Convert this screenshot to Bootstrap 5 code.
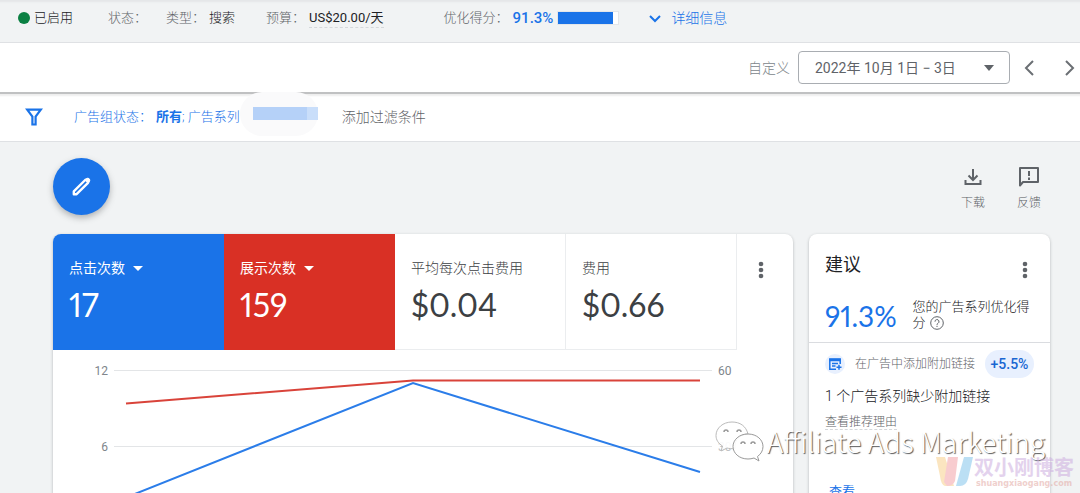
<!DOCTYPE html>
<html lang="zh-CN">
<head>
<meta charset="utf-8">
<meta name="viewport" content="width=device-width, initial-scale=1">
<title>广告系列</title>
<link href="https://cdn.jsdelivr.net/npm/bootstrap@5.3.0/dist/css/bootstrap.min.css" rel="stylesheet">
<style>
  body { font-family: Roboto, "Noto Sans CJK SC", sans-serif; font-size: 13px; line-height: 20px; font-weight: 300; color: #3c4043; background: #f1f3f4; }
  svg { display: block; flex: none; }
  a { color: #1a73e8; text-decoration: none; }
  b { font-weight: 700; }
  button { font: inherit; border: 0; background: none; padding: 0; color: inherit; }
  .shell { height: 100vh; overflow: hidden; }
  .status-bar { height: 43px; padding: 0 18px 7px; border-bottom: 1px solid #dfe1e4; box-shadow: inset 0 4px 2px -2px #e4e6e8; }
  .muted { color: #5f6368; }
  .faint { color: #80868b; }
  .dark { color: #202124; }
  .blue { color: #1a73e8; }
  .dot { width: 12px; height: 12px; background: #0b8043; }
  .gap-s { margin-left: 19px; }
  .gap-m { margin-left: 31px; }
  .gap-l { margin-left: 60px; }
  .dashed { border-bottom: 1px dashed #d5d8db; }
  .budget { font-weight: 400; line-height: 18px; padding-top: 1px; }
  .score { font-family: Roboto, sans-serif; font-size: 15px; font-weight: 500; }
  .meter { width: 62px; height: 14px; border: 1px solid #e4e6e9; background: #fff; }
  .meter-fill { height: 12px; background: #1a73e8; }
  .fs14 { font-size: 14px; }
  .fs12 { font-size: 12px; }
  .date-bar { height: 51px; background: #fff; border-bottom: 2px solid #c0c1c2; padding-right: 5px; }
  .date-btn { width: 212px; height: 33px; border: 1px solid #a9adb2; border-radius: 4px; padding: 0 14px 0 16px; margin-right: 14px; font-weight: 400; color: #5f6368; }
  .filter-bar { height: 48px; background: #fff; border-bottom: 1px solid #dfe1e4; box-shadow: inset 0 4px 2px -2px #eee; padding: 0 0 2px 25px; }
  .filter-link { margin-left: 31px; }
  .smudge { width: 78px; height: 44px; border-radius: 34px; background: #fafafb; margin-top: -2px; padding: 15px 0 0 13px; align-self: flex-start; }
  .smudge-fill { height: 13px; background: linear-gradient(90deg, #b5d1f8 54px, #c9defa 54px); }
  .content { padding: 16px 30px 0 53px; }
  .fab { width: 57px; height: 57px; border-radius: 50%; background: #1a73e8; box-shadow: 0 3px 6px rgba(60,64,67,.35); }
  .tools { gap: 32px; padding: 5px 9px 0 0; }
  .tools button { width: 24px; white-space: nowrap; }
  .panel { background: #fff; border-radius: 8px; box-shadow: 0 1px 3px rgba(60,64,67,.35); overflow: hidden; }
  .panels { gap: 16px; margin-top: 19px; }
  .tile { flex: 1 1 0; height: 116px; padding: 24px 16px 0; text-align: left; border-right: 1px solid #ebedef; border-bottom: 1px solid #ebedef; }
  .tile-blue { background: #1a73e8; border-color: #1a73e8; color: #fff; }
  .tile-red { background: #d93025; border-color: #d93025; color: #fff; }
  .tile-blue, .tile-red { font-weight: 400; }
  .big-num { font-family: Lato, sans-serif; font-size: 32px; line-height: 40px; font-weight: 400; font-variant-numeric: proportional-nums; margin-top: 7px; }
  .more { width: 56px; padding: 27px 0 0; }
  .advice { width: 241px; height: 400px; flex: none; }
  .advice-top { padding: 16px 14px 0 16px; height: 109px; border-bottom: 1px solid #dadce0; }
  .advice-body { padding: 7px 16px 0; }
  .title { font-size: 18px; line-height: 30px; font-weight: 400; }
  .pct { font-family: Lato, sans-serif; font-size: 28px; line-height: 32px; font-weight: 400; font-variant-numeric: proportional-nums; padding-top: 2px; }
  .lh16 { line-height: 16px; }
  .chip { width: 20px; height: 20px; border-radius: 50%; background: #e8f0fe; }
  .gain { width: 49px; height: 28px; border-radius: 14px; background: #e8f0fe; color: #1967d2; font-size: 14px; font-weight: 500; }
  .axis { font: 400 12px Roboto, sans-serif; fill: #80868b; }
  .wm-wechat { right: 35px; bottom: 30px; gap: 3px; color: #fff; font: 300 28px/40px "Noto Sans CJK SC", sans-serif; text-shadow: 1px 1px 1px #555; }
  .wm-blog { right: 6px; bottom: 1px; height: 40px; opacity: .55; }
  .wm-name { font: 700 20px/24px "Noto Sans CJK SC", sans-serif; color: #cdaee0; }
  .wm-url { font: 700 8px/10px "DejaVu Sans", sans-serif; color: #e3a9a4; }
</style>
</head>
<body>
<div class="shell position-relative">
  <header class="status-bar d-flex align-items-center text-nowrap">
    <span class="dot rounded-circle me-1"></span><span class="dark">已启用</span>
    <span class="muted gap-m ps-1">状态：</span>
    <span class="muted gap-s">类型：</span><span class="dark ms-1">搜索</span>
    <span class="muted gap-m">预算：</span><span class="dark dashed budget ms-1">US$20.00/天</span>
    <span class="muted gap-l">优化得分：</span><span class="blue score ms-1">91.3%</span>
    <div class="meter ms-1"><div class="meter-fill" style="width:91.3%"></div></div>
    <a href="#" class="fs14 d-flex align-items-center ms-4">
      <svg class="ms-1 me-2" width="16" height="16" viewBox="0 0 16 16" fill="none" stroke="#1a73e8" stroke-width="2"><path d="M3 6l5 5 5-5"/></svg>详细信息</a>
  </header>

  <div class="date-bar d-flex align-items-center justify-content-end">
    <label for="range" class="fs14 faint me-2">自定义</label>
    <button id="range" class="date-btn fs14 d-flex align-items-center justify-content-between" type="button">2022年 10月 1日 − 3日
      <svg width="12" height="6" viewBox="0 0 12 6"><path d="M1 0h10L6 6z" fill="#5f6368"/></svg></button>
    <button type="button" aria-label="上一个"><svg width="10" height="18" viewBox="0 0 10 18" fill="none" stroke="#6b6f74" stroke-width="2"><path d="M9 2L2 9l7 7"/></svg></button>
    <button class="gap-m" type="button" aria-label="下一个"><svg width="10" height="18" viewBox="0 0 10 18" fill="none" stroke="#6b6f74" stroke-width="2"><path d="M1 2l7 7-7 7"/></svg></button>
  </div>

  <div class="filter-bar d-flex align-items-center text-nowrap">
    <svg width="18" height="18" viewBox="0 0 18 18" fill="none" stroke="#1a73e8" stroke-width="2.2"><path d="M2.200 1.600h13.600L10.600 8.500v8H7.400v-8z"/></svg>
    <a href="#" class="filter-link">广告组状态：<b class="ms-1">所有</b>; 广告系列</a>
    <div class="smudge"><div class="smudge-fill"></div></div>
    <button class="fs14 muted ms-4" type="button">添加过滤条件</button>
  </div>

  <main class="content">
    <div class="d-flex justify-content-between">
      <button class="fab d-flex align-items-center justify-content-center" type="button" aria-label="修改">
        <svg width="24" height="24" viewBox="0 0 24 24" fill="none" stroke="#fff"><path d="M3.800 16.400L15.200 5a2 2 0 0 1 2.800 2.800L6.600 19.200H3.800z" stroke-width="2.400" stroke-linejoin="round"/><path d="M15 5.200l2.800 2.800 1.600-1.600a2 2 0 0 0-2.800-2.800z" fill="#fff"/></svg></button>
      <div class="tools d-flex fs12 muted">
        <button type="button"><svg class="mb-1" width="24" height="24" viewBox="0 0 24 24" fill="none" stroke="#5f6368" stroke-width="2"><path d="M12 4v10M7.500 10.500L12 15l4.500-4.500M4.500 15v4h15v-4"/></svg>下载</button>
        <button type="button"><svg class="mb-1" width="24" height="24" viewBox="0 0 24 24"><path d="M3 3h18v14H6l-3 3.500z" fill="none" stroke="#5f6368" stroke-width="2" stroke-linejoin="round"/><path d="M12 6v5M12 12.500v2.500" stroke="#5f6368" stroke-width="2"/></svg>反馈</button>
      </div>
    </div>

    <div class="panels d-flex align-items-start">
      <section class="panel flex-grow-1">
        <div class="d-flex">
          <button class="tile tile-blue d-flex flex-column" type="button"><span class="fs14 d-flex align-items-center">点击次数<svg class="ms-2" width="10" height="5" viewBox="0 0 10 5"><path d="M0 0h10L5 5z" fill="#fff"/></svg></span><span class="big-num">17</span></button>
          <button class="tile tile-red d-flex flex-column" type="button"><span class="fs14 d-flex align-items-center">展示次数<svg class="ms-2" width="10" height="5" viewBox="0 0 10 5"><path d="M0 0h10L5 5z" fill="#fff"/></svg></span><span class="big-num">159</span></button>
          <button class="tile d-flex flex-column" type="button"><span class="fs14">平均每次点击费用</span><span class="big-num">$0.04</span></button>
          <button class="tile d-flex flex-column" type="button"><span class="fs14">费用</span><span class="big-num">$0.66</span></button>
          <button class="more d-flex justify-content-center align-self-start" type="button" aria-label="更多"><svg class="me-2" width="6" height="18" viewBox="0 0 6 18" fill="#5f6368"><circle cx="3" cy="3" r="2.300"/><circle cx="3" cy="9" r="2.300"/><circle cx="3" cy="15" r="2.300"/></svg></button>
        </div>
        <svg class="w-100" viewBox="0 0 740 240" role="img" aria-label="点击次数和展示次数">
          <g stroke="#e3e5e7"><path d="M61 20.500h598M61 96.500h598M61 172.500h598"/></g>
          <g class="axis"><text x="55" y="25" text-anchor="end">12</text><text x="55" y="101" text-anchor="end">6</text><text x="665" y="25">60</text><text x="665" y="101" opacity=".5">30</text></g>
          <g fill="none" stroke-width="2"><path d="M73 53.500L360 30.500h287" stroke="#d9433a"/><path d="M73 147.500L360 33l287 89" stroke="#2b7de9"/></g>
        </svg>
      </section>

      <aside class="panel advice">
        <div class="advice-top">
          <div class="d-flex justify-content-between"><h2 class="title dark m-0">建议</h2>
            <button class="mt-2" type="button" aria-label="更多"><svg class="me-2" width="6" height="24" viewBox="0 0 6 24" fill="#5f6368"><circle cx="3" cy="6" r="2.300"/><circle cx="3" cy="12" r="2.300"/><circle cx="3" cy="18" r="2.300"/></svg></button></div>
          <div class="d-flex align-items-center gap-3 mt-3">
            <span class="pct blue">91.3%</span>
            <div class="lh16 dark text-nowrap">您的广告系列优化得<div class="d-flex align-items-center">分<svg class="ms-1" width="14" height="14" viewBox="0 0 14 14" fill="none" stroke="#5f6368"><circle cx="7" cy="7" r="6.300"/><path d="M5 5.700a2 2 0 1 1 3 1.600c-.7.500-1 .8-1 1.500M7 9.800v1.200"/></svg></div></div>
          </div>
        </div>
        <div class="advice-body">
          <div class="d-flex align-items-center justify-content-between text-nowrap">
            <span class="chip d-flex align-items-center justify-content-center"><svg width="14" height="14" viewBox="0 0 14 14" fill="none" stroke="#1a73e8" stroke-width="1.500"><path d="M8 12.200H1.800V2h10.400v5"/><path d="M1.500 3h11" stroke-width="2.500"/><path d="M4 6.500h6M4 9h3.500M11 7.800v5M8.500 10.300h5"/></svg></span>
            <span class="fs12 muted">在广告中添加附加链接</span>
            <span class="gain d-flex align-items-center justify-content-center">+5.5%</span>
          </div>
          <div class="fs14 dark mt-2 text-nowrap">1 个广告系列缺少附加链接</div>
          <div class="mt-2 fs12 muted lh16"><span class="dashed">查看推荐理由</span></div>
          <div class="mt-5 pt-1 ps-1"><a class="fw-normal" href="#">查看</a></div>
        </div>
      </aside>
    </div>
  </main>

  <div class="wm-wechat position-absolute d-flex align-items-center text-nowrap">
    <svg width="50" height="44" viewBox="0 0 50 44" stroke="#999"><g fill="#fff" fill-opacity=".9"><path d="M18 3C9 3 2 9 2 16.500c0 4.500 2.500 8 6.500 10.500L7 32l6-3c2 .6 5 .9 8 .6C20 20 27 15 34 15 32 7 26 3 18 3z" stroke="#bbb"/><path d="M34 15c-9 0-15 6-15 12.500S25 40 34 40c2 0 4-.3 6-1l5 3-1.500-4.500C47 35 49 31.500 49 27.500 49 21 43 15 34 15z"/></g><g fill="none" stroke-width="1.500"><path d="M10 13a2 2 0 0 1 4 0M23 13a2 2 0 0 1 4 0M27 25a2 2 0 0 1 4 0M37 25a2 2 0 0 1 4 0"/></g></svg>
    <span>Affiliate Ads Marketing</span>
  </div>
  <div class="wm-blog position-absolute d-flex align-items-center text-nowrap">
    <svg width="38" height="32" viewBox="0 0 38 32"><path d="M0 1h9l9 29H9Q5 29 4 20z" fill="#f9d18d"/><path d="M12 1h10l-3 24q-2 5-8 5L8 26z" fill="#f3a4a8"/><path d="M28 1h9l-5 22q-2 7-8 7h-4z" fill="#85c6ec"/></svg>
    <div class="text-center"><div class="wm-name">双小刚博客</div><div class="wm-url">shuangxiaogang.com</div></div>
  </div>
</div>
<script src="https://cdn.jsdelivr.net/npm/bootstrap@5.3.0/dist/js/bootstrap.bundle.min.js"></script>
</body>
</html>
